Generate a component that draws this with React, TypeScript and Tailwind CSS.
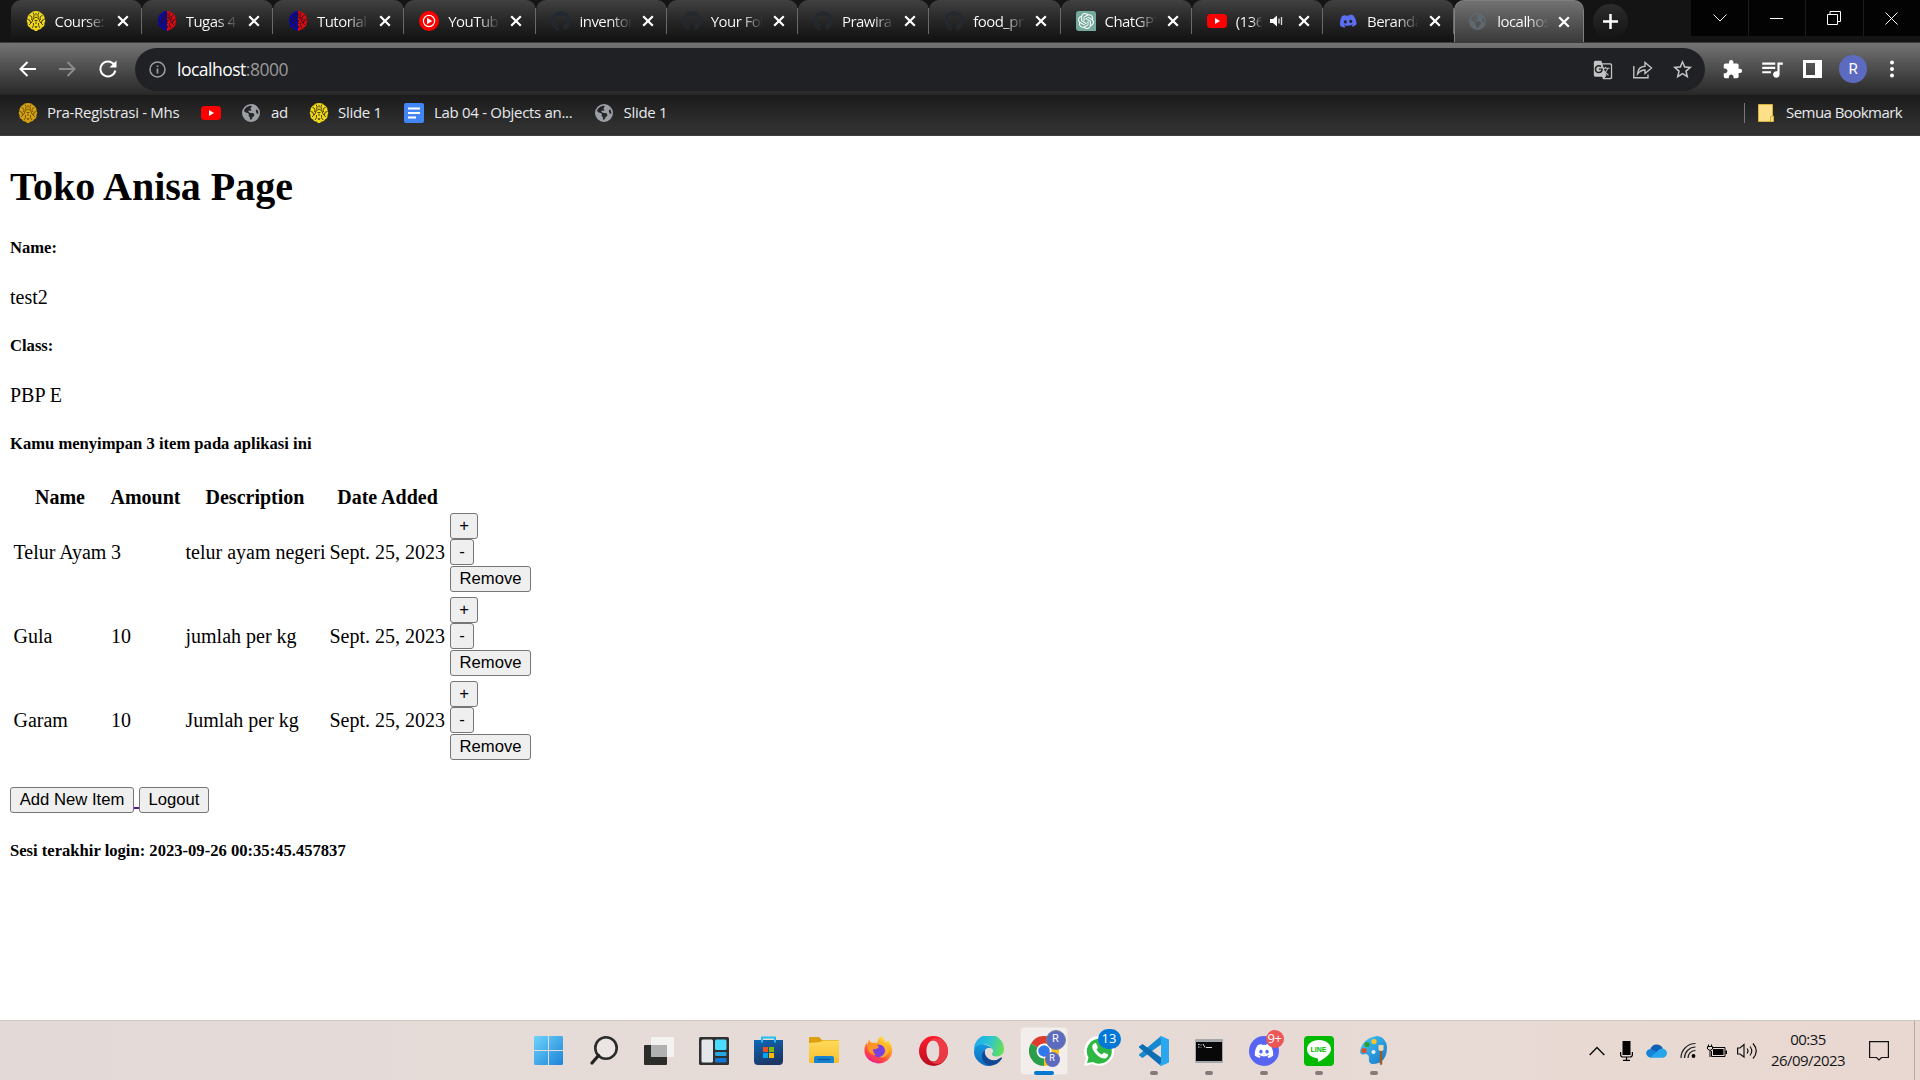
import React from "react";
import { FaGithub, FaDiscord, FaEarthAmericas } from "react-icons/fa6";
import { MdExtension, MdQueueMusic, MdGTranslate, MdStarBorder } from "react-icons/md";
import { SiOpenai } from "react-icons/si";

function Crest({ left, right, detail }: { left: string; right: string; detail: string }) {
  return (
    <svg width="20" height="20" viewBox="0 0 20 20">
      <path d="M10 0Q6 0 5 2Q1.500 4 1.500 7Q0 10 1.500 12Q1 15 4 16.500Q5 19 7.500 18.500L9 20H10Z" fill={left} />
      <path d="M10 0Q14 0 15 2Q18.500 4 18.500 7Q20 10 18.500 12Q19 15 16 16.500Q15 19 12.500 18.500L11 20H10Z" fill={right} />
      <g stroke={detail} strokeWidth=".9" fill="none">
        <path d="M7 1.500Q9 3.500 7.500 6.500M13 1.500Q11 3.500 12.500 6.500M3.500 4.500Q7 5 5.500 9M16.500 4.500Q13 5 14.500 9M1.500 8.500Q5 8.500 4.500 12M18.500 8.500Q15 8.500 15.500 12" />
        <path d="M3 14Q7 11 7 8L10 6L13 8Q13 11 17 14M6 17Q8 15 7.500 12M14 17Q12 15 12.500 12M10 2V4.500M8.500 9.500H11.500M10 10.500V13M9 15L10 17L11 15" />
      </g>
    </svg>
  );
}

function YouTube() {
  return (
    <svg width="20" height="20" viewBox="0 0 20 20">
      <rect y="3" width="20" height="14" rx="3.500" fill="#f00" />
      <path d="M8 7V13L13 10Z" fill="#fff" />
    </svg>
  );
}

function YouTubeMusic() {
  return (
    <svg width="20" height="20" viewBox="0 0 20 20">
      <circle cx="10" cy="10" r="10" fill="#f00" />
      <circle cx="10" cy="10" r="5.600" fill="none" stroke="#fff" strokeWidth="1.200" />
      <path d="M8 6.800V13.200L13.200 10Z" fill="#fff" />
    </svg>
  );
}

function CloseIcon() {
  return (
    <svg width="12" height="12" viewBox="0 0 12 12" className="shrink-0">
      <path d="M1.200 1.200L10.800 10.800M10.800 1.200L1.200 10.800" stroke="#fff" strokeWidth="2.200" />
    </svg>
  );
}

const gold = <Crest left="#efd81c" right="#efd81c" detail="#3a3208" />;
const amber = <Crest left="#d3a012" right="#d3a012" detail="#6e5008" />;
const split = <Crest left="#0a0aa0" right="#d80a0f" detail="#241018" />;
const github = <FaGithub size={20} color="#24292f" />;

const tabs: { title: string; icon: React.ReactNode; audio?: boolean }[] = [
  { title: "Course:", icon: gold },
  { title: "Tugas 4", icon: split },
  { title: "Tutorial", icon: split },
  { title: "YouTube", icon: <YouTubeMusic /> },
  { title: "inventor", icon: github },
  { title: "Your Fol", icon: github },
  { title: "PrawiraR", icon: github },
  { title: "food_pr", icon: github },
  {
    title: "ChatGPT",
    icon: (
      <span className="flex size-5 items-center justify-center rounded-tl-[3px] rounded-tr-[3px] rounded-bl-[3px] bg-[#74aa9c]">
        <SiOpenai size={16} color="#fff" />
      </span>
    ),
  },
  { title: "(136", icon: <YouTube />, audio: true },
  { title: "Beranda", icon: <FaDiscord size={18} color="#5b6df0" className="-rotate-6" /> },
];

function Tab({ title, icon, audio }: { title: string; icon: React.ReactNode; audio?: boolean }) {
  return (
    <div className="flex h-full w-[131.25px] shrink-0 items-center rounded-t-[10px] bg-linear-to-b from-[#414141] via-[#262626] to-[#111]">
      <div className="flex h-full w-full items-center pl-[15px]">
        <span className="flex w-5 justify-center">{icon}</span>
        <span
          className={
            "ml-[9px] overflow-hidden whitespace-nowrap bg-clip-text text-transparent bg-linear-to-r from-white from-60% to-white/5 " +
            (audio ? "w-[26px]" : "w-[51px]")
          }
        >
          {title}
        </span>
        {audio && (
          <svg width="13" height="12" viewBox="0 0 13 12" className="ml-[8px] mr-[4px]">
            <path d="M0 4H3L7 .5V11.500L3 8H0Z" fill="#fff" />
            <path d="M9 3.500V8.500M11.500 2V10" stroke="#ddd" strokeWidth="1.300" />
          </svg>
        )}
        <span className="ml-[11px]">
          <CloseIcon />
        </span>
      </div>
      <span className="h-[26px] w-px shrink-0 bg-[#6a6a6a]" />
    </div>
  );
}

function TabStrip() {
  return (
    <div className="flex h-[42px] bg-[#141414] pl-[10.5px] text-[15px] tracking-[-0.55px] text-white">
      {tabs.map((t, i) => (
        <Tab key={i} {...t} />
      ))}
      <div className="flex w-[130px] items-center rounded-t-[10px] border-x border-t border-[#808080] bg-linear-to-b from-[#727272] to-[#3a3a3a] pl-[14px]">
        <FaEarthAmericas size={17} color="#5f6870" className="mr-[2px]" />
        <span className="ml-[9px] w-[51px] overflow-hidden whitespace-nowrap bg-linear-to-r from-white from-60% to-white/5 bg-clip-text text-transparent">
          localhos
        </span>
        <span className="ml-[10px]">
          <CloseIcon />
        </span>
      </div>
      <div className="mt-[4px] ml-[9px] flex size-[35px] items-center justify-center rounded-full bg-linear-to-b from-[#2c2c2c] to-[#141414]">
        <svg width="15" height="15" viewBox="0 0 15 15">
          <path d="M7.500 0V15M0 7.500H15" stroke="#fff" strokeWidth="2.500" />
        </svg>
      </div>
      <div className="ml-auto flex h-9 bg-[#030303]">
        <div className="flex w-[58px] items-center justify-center border-r border-[#1c1c1c]">
          <svg width="14" height="8" viewBox="0 0 14 8"><path d="M.5 .5L7 7L13.500 .5" stroke="#eee" fill="none" /></svg>
        </div>
        <div className="flex w-[57px] items-center justify-center border-r border-[#1c1c1c]">
          <span className="mr-px h-px w-[13px] bg-white" />
        </div>
        <div className="flex w-[58px] items-center justify-center border-r border-[#1c1c1c] pr-[2px]">
          <svg width="14" height="14" viewBox="0 0 14 14"><path d="M.5 3.500H10.500V13.500H.5ZM3 3V.5H13.500V10.500H11" stroke="#fff" fill="none" /></svg>
        </div>
        <div className="flex w-[56px] items-center justify-center pr-[2px]">
          <svg width="13" height="13" viewBox="0 0 13 13"><path d="M.5 .5L12.500 12.500M12.500 .5L.5 12.500" stroke="#fff" /></svg>
        </div>
      </div>
    </div>
  );
}

function Arrow({ color, flip }: { color: string; flip?: boolean }) {
  return (
    <svg width="17" height="16" viewBox="0 0 17 16" className={flip ? "-scale-x-100" : ""}>
      <path d="M8.500 1L1.500 8L8.500 15M1.500 8H17" stroke={color} strokeWidth="2" fill="none" />
    </svg>
  );
}

function Toolbar() {
  return (
    <div className="flex h-[53px] border-t border-[#3c3c3c] bg-linear-to-b from-[#747474] to-[#282828] pt-[5px]">
      <div className="flex h-[42px] w-[135px] items-center pl-[19px]">
        <Arrow color="#fff" />
        <span className="ml-[23px]"><Arrow color="#8b8b8b" flip /></span>
        <svg width="18" height="18" viewBox="0 0 18 18" className="ml-[23px]">
          <path d="M15 4.500A7.500 7.500 0 1 0 16.300 10.500" stroke="#fff" strokeWidth="2" fill="none" />
          <path d="M17.500 .5V7.500H10.500Z" fill="#fff" />
        </svg>
      </div>
      <div className="flex h-[43px] w-[1570px] items-center rounded-full bg-[#202124] pl-[14px] pr-[11px]">
        <svg width="17" height="17" viewBox="0 0 17 17">
          <circle cx="8.500" cy="8.500" r="7.500" stroke="#9aa0a6" strokeWidth="1.500" fill="none" />
          <path d="M8.500 7.500V12.500M8.500 4.500V6" stroke="#9aa0a6" strokeWidth="1.700" />
        </svg>
        <span className="ml-[11px] text-[17.5px] tracking-[-0.5px] text-[#9a9a9a]">
          <span className="text-white">localhost</span>:8000
        </span>
        <div className="ml-auto flex items-center text-[#c4c4c4]">
          <MdGTranslate size={20} />
          <svg width="20" height="18" viewBox="0 0 20 18" className="ml-[20px]">
            <path d="M.8 5V16.800H15V13.500M4.500 13Q5 5.500 12 5.200V1.500L18.500 7L12 12.500V9Q7.500 9 4.500 13Z" stroke="#c4c4c4" strokeWidth="1.400" fill="none" />
          </svg>
          <MdStarBorder size={23} className="ml-[18px]" />
        </div>
      </div>
      <div className="flex h-[42px] items-center pl-[17px] text-white">
        <MdExtension size={21} />
        <MdQueueMusic size={26} className="ml-[16px]" />
        <svg width="19" height="18" viewBox="0 0 19 18" className="ml-[18px]">
          <path d="M0 0H19V18H0ZM3 3V15H12V3Z" fill="#fff" fillRule="evenodd" />
        </svg>
        <span className="ml-[17px] flex size-7 items-center justify-center rounded-full bg-[#5c6bc0] font-[Roboto,sans-serif] text-[15px]">
          R
        </span>
        <svg width="4" height="18" viewBox="0 0 4 18" className="ml-[23px]" fill="#fff">
          <circle cx="2" cy="2.500" r="2" /><circle cx="2" cy="9" r="2" /><circle cx="2" cy="15.500" r="2" />
        </svg>
      </div>
    </div>
  );
}

function Bookmarks() {
  return (
    <div className="flex h-[41px] items-center border-b border-[#3e3e3e] bg-linear-to-b from-[#1b1b1b] to-[#303030] to-80% pb-[5px] pl-[18px] pr-[17px] text-[15px] tracking-[-0.3px] whitespace-nowrap text-[#e8eaed]">
      {amber}
      <span className="ml-[9px] w-[154px]">Pra-Registrasi - Mhs</span>
      <YouTube />
      <FaEarthAmericas size={18} color="#9aa0a6" className="ml-[21px]" />
      <span className="ml-[11px] w-[38px]">ad</span>
      {gold}
      <span className="ml-[9px] w-[66px]">Slide 1</span>
      <svg width="20" height="20" viewBox="0 0 20 20">
        <rect width="20" height="20" rx="2" fill="#4285f4" />
        <path d="M4 5.500H16M4 10H16M4 14.500H12" stroke="#fff" strokeWidth="2" />
      </svg>
      <span className="ml-[10px] w-[161px]">Lab 04 - Objects an...</span>
      <FaEarthAmericas size={18} color="#9aa0a6" />
      <span className="ml-[10.5px]">Slide 1</span>
      <span className="ml-auto h-5 w-px bg-[#777]" />
      <svg width="16" height="18" viewBox="0 0 16 18" className="ml-[13px]">
        <path d="M.5 .5H14.500V12H15.500V17.500H.5Z" fill="#ffe08a" stroke="#d9b038" />
        <path d="M12.500 17V12.500H15" stroke="#d9b038" fill="none" />
      </svg>
      <span className="ml-[12px] w-[117px] tracking-[-0.55px]">Semua Bookmark</span>
    </div>
  );
}

const items = [
  ["Telur Ayam", "3", "telur ayam negeri"],
  ["Gula", "10", "jumlah per kg"],
  ["Garam", "10", "Jumlah per kg"],
];

function Button({ children, className }: { children: React.ReactNode; className: string }) {
  return (
    <button
      className={
        "flex h-[26px] shrink-0 items-center justify-center rounded-[3px] border border-[#767676] bg-[#efefef] pt-px font-['Liberation_Sans',sans-serif] text-[16.67px] leading-none whitespace-nowrap text-black " +
        className
      }
    >
      {children}
    </button>
  );
}

function Page() {
  return (
    <main className="h-[884px] overflow-hidden bg-white px-[10px] pt-[28px] font-['Liberation_Serif',serif] text-[20px] leading-[23px] text-black">
      <h1 className="text-[40px] leading-[46px] font-bold">Toko Anisa Page</h1>
      <h5 className="mt-[28px] text-[16.6px] leading-[19px] font-bold">Name:</h5>
      <p className="mt-[29px]">test2</p>
      <h5 className="mt-[27px] text-[16.6px] leading-[19px] font-bold">Class:</h5>
      <p className="mt-[29px]">PBP E</p>
      <h5 className="mt-[27px] text-[16.6px] leading-[19px] font-bold">Kamu menyimpan 3 item pada aplikasi ini</h5>
      <table className="mt-[27px] w-[524px] table-fixed border-collapse">
        <colgroup>
          <col className="w-[97px]" />
          <col className="w-[75px]" />
          <col className="w-[144px]" />
          <col className="w-[121px]" />
          <col />
        </colgroup>
        <thead>
          <tr className="h-[30px] font-bold">
            <th className="pt-[4px] pl-[3px]">Name</th>
            <th className="pt-[4px] pl-[2px]">Amount</th>
            <th className="pt-[4px] pl-[2px]">Description</th>
            <th className="pt-[4px] pl-[2px]">Date Added</th>
            <th />
          </tr>
        </thead>
        <tbody>
          {items.map(([name, amount, description]) => (
            <tr key={name} className="h-[84px] whitespace-nowrap">
              <td className="pt-px pl-[3.5px]">{name}</td>
              <td className="pt-px pl-[4px]">{amount}</td>
              <td className="pt-px pl-[3.5px]">{description}</td>
              <td className="pt-px pl-[3.5px]">Sept. 25, 2023</td>
              <td className="pl-[3px]">
                <div className="flex h-[79px] flex-col items-start justify-between">
                  <Button className="w-[28px]">+</Button>
                  <Button className="w-[24px]">-</Button>
                  <Button className="w-[81px]">Remove</Button>
                </div>
              </td>
            </tr>
          ))}
        </tbody>
      </table>
      <div className="mt-[25px] flex">
        <Button className="w-[124px]">Add New Item</Button>
        <span className="mt-[20px] h-[2px] w-[5px] bg-[#551a8b]" />
        <Button className="w-[70px]">Logout</Button>
      </div>
      <h5 className="mt-[28px] text-[16.6px] leading-[19px] font-bold">
        Sesi terakhir login: 2023-09-26 00:35:45.457837
      </h5>
    </main>
  );
}

function Windows() {
  return (
    <svg width="29" height="29" viewBox="0 0 29 29">
      <defs>
        <linearGradient id="win" x1="0" y1="0" x2="1" y2="1"><stop stopColor="#6fd3fb" /><stop offset="1" stopColor="#1c83d8" /></linearGradient>
      </defs>
      <path d="M1 0H14V14H0V1ZM15 0H28L29 1V14H15ZM0 15H14V29H1L0 28ZM15 15H29V28L28 29H15Z" fill="url(#win)" />
    </svg>
  );
}

function Search() {
  return (
    <svg width="28" height="29" viewBox="0 0 28 29">
      <circle cx="16" cy="12" r="10.700" stroke="#2b2b2b" strokeWidth="2.600" fill="#f4f0ef" fillOpacity=".5" />
      <path d="M8.500 19.500L2 27" stroke="#222" strokeWidth="3.200" strokeLinecap="round" />
    </svg>
  );
}

function TaskView() {
  return (
    <svg width="30" height="28" viewBox="0 0 30 28">
      <rect y="8" width="23" height="20" rx="1" fill="#2c2d2a" />
      <rect x="7" width="23" height="20" rx="1" fill="#f7f7f7" fillOpacity=".85" />
      <rect x="7" y="8" width="16" height="12" fill="#a8a8a8" fillOpacity=".8" />
    </svg>
  );
}

function Widgets() {
  return (
    <svg width="30" height="28" viewBox="0 0 30 28">
      <rect width="30" height="28" rx="1.500" fill="#303030" />
      <rect x="2.500" y="2.500" width="11.500" height="23" rx="1.500" fill="#e4e7e9" />
      <rect x="16" y="2.500" width="11.500" height="10.500" rx="1.500" fill="#4cdcff" />
      <rect x="16" y="15" width="11.500" height="4" rx="1" fill="#28a6e4" />
      <rect x="16" y="21" width="11.500" height="4.500" rx="1" fill="#1078d4" />
    </svg>
  );
}

function Store() {
  return (
    <svg width="29" height="29" viewBox="0 0 29 29">
      <defs><linearGradient id="store" x1="0" y1="0" x2=".4" y2="1"><stop stopColor="#0d68b8" /><stop offset="1" stopColor="#1c3767" /></linearGradient></defs>
      <path d="M8 6V1.500H21V6" stroke="#23bff2" strokeWidth="2" fill="none" />
      <path d="M0 4H29V25Q29 29 25 29H4Q0 29 0 25Z" fill="url(#store)" />
      <path d="M8 4V6.500M21 4V6.500" stroke="#23bff2" strokeWidth="2" />
      <path d="M9 11H14V16H9Z" fill="#f25022" /><path d="M15 11H20V16H15Z" fill="#7fba00" />
      <path d="M9 17H14V22H9Z" fill="#00a4ef" /><path d="M15 17H20V22H15Z" fill="#ffb900" />
    </svg>
  );
}

function Explorer() {
  return (
    <svg width="30" height="27" viewBox="0 0 30 27">
      <defs><linearGradient id="fold" x1="0" y1="0" x2="0" y2="1"><stop stopColor="#ffda5c" /><stop offset="1" stopColor="#f8be2e" /></linearGradient></defs>
      <path d="M0 1Q0 0 1 0H10L13 3H29Q30 3 30 4V10H0Z" fill="#dc9f0e" />
      <path d="M0 6L11 5L14 3.500H30V25Q30 26 29 26H1Q0 26 0 25Z" fill="url(#fold)" />
      <path d="M5 26V21Q5 19 7 19H23Q25 19 25 21V26Z" fill="#1784d2" />
      <path d="M8.500 22.500H21.500" stroke="#0c599f" strokeWidth="1.500" />
    </svg>
  );
}

function Firefox() {
  return (
    <svg width="29" height="29" viewBox="0 0 29 29">
      <defs><linearGradient id="fx" x1=".8" y1="0" x2=".25" y2="1"><stop stopColor="#fff14a" /><stop offset=".4" stopColor="#ff9a1f" /><stop offset=".75" stopColor="#ff4248" /><stop offset="1" stopColor="#e3199a" /></linearGradient></defs>
      <path d="M17 0Q21 3 21 6Q23 7 24 4Q29 10 28 17A14 13.500 0 0 1 .5 16Q0 10 3 6.500V10L5 3.500Q6 6 8 7Q11 6 13 7Q14 2 17 0Z" fill="url(#fx)" />
      <circle cx="15" cy="15" r="6.500" fill="#7a3fe0" />
      <path d="M3 10Q7 6 13 9L15 11Q12 14 9 13Q9 17 12 19Q8 20 5 16Z" fill="#ff9526" />
      <path d="M14 8Q21 9 21 15Q20 20 15 21Q22 23 25 15Q23 7 18 6Z" fill="#ffbd2f" fillOpacity=".75" />
    </svg>
  );
}

function Opera() {
  return (
    <svg width="29" height="30" viewBox="0 0 29 30">
      <defs><linearGradient id="op" x1="0" y1="0" x2="0" y2="1"><stop stopColor="#ff1b2d" /><stop offset="1" stopColor="#b80d20" /></linearGradient></defs>
      <path fillRule="evenodd" d="M14.500 0A14.500 15 0 1 0 14.500 30A14.500 15 0 1 0 14.500 0ZM14.500 4.500C18.500 4.500 20.500 9 20.500 15S18.500 25.500 14.500 25.500S7.500 21 7.500 15S10 4.500 14.500 4.500Z" fill="url(#op)" />
      <path d="M10 6Q15 0 22 3Q29 7 29 15T22 27Q16 30 10 24Q13 26.500 16 25.200Q20.500 23 20.500 15T16 4.800Q13 3.500 10 6Z" fill="#f0434c" fillOpacity=".8" />
    </svg>
  );
}

function Edge() {
  return (
    <svg width="30" height="30" viewBox="0 0 30 30">
      <defs>
        <linearGradient id="ed" x1="0" y1=".3" x2="1" y2=".5"><stop stopColor="#1ca9ec" /><stop offset=".5" stopColor="#2cc4d4" /><stop offset="1" stopColor="#67e052" /></linearGradient>
        <linearGradient id="ed2" x1="0" y1="0" x2="0" y2="1"><stop stopColor="#1499e0" /><stop offset="1" stopColor="#0b68bb" /></linearGradient>
      </defs>
      <path d="M0 14A15 15 0 0 1 30 13Q30 20 23 20.500Q17.500 20.500 18 17.500Q20 16 18.500 13Q15 7 8 9Q2 10 0 14Z" fill="url(#ed)" />
      <path d="M0 15Q1 8 9 8.500Q16 9 18.500 13Q14 10 11 14Q7 20 12 25Q16 29 19 29Q12 32 5 26Q-.5 21 0 15Z" fill="url(#ed2)" />
      <path d="M11 14Q10 20 15 23Q21 26 27 21.500Q28.500 21 28 22.500Q23 30 16 29.500Q7 27 8 19Q9 15 11 14Z" fill="#114a93" />
    </svg>
  );
}

function Chrome() {
  return (
    <svg width="30" height="30" viewBox="0 0 30 30">
      <path d="M15 15L2 7.500A15 15 0 0 1 28 7.500Z" fill="#df3c30" />
      <path d="M15 15L2 7.500A15 15 0 0 0 15 30L21.500 18.700Z" fill="#2b9d4b" />
      <path d="M15 15L15 30A15 15 0 0 0 28 7.500H15Z" fill="#fcc21b" />
      <circle cx="15" cy="15" r="7.500" fill="#fff" /><circle cx="15" cy="15" r="5.800" fill="#3079ed" />
    </svg>
  );
}

function WhatsApp() {
  return (
    <svg width="32" height="32" viewBox="0 0 32 32">
      <path d="M1 31L3 23A15 15 0 1 1 9 29Z" fill="#fff" />
      <path d="M4 28L5.500 22.500A12.500 12.500 0 1 1 10 27Z" fill="#2eb843" />
      <path d="M11 8.500Q13 7.500 13.500 9L14.800 12Q15 13 13.500 14.500Q15.500 18.500 19 19.500L21 17.500L25 19.500Q25 22.500 22 23.500Q18 24 13.500 19.500Q8 14 9.500 10Z" fill="#fff" />
    </svg>
  );
}

function VsCode() {
  return (
    <svg width="30" height="30" viewBox="0 0 30 30">
      <path d="M22 0V8.500L3.500 22L0 19.500V18.500Z" fill="#1789d1" />
      <path d="M0 11.500V10.500L3.500 8L22 21.500V30Z" fill="#0c6eb4" />
      <path d="M22 0L30 3.500V26.500L22 30L20.500 28.500L22 27V3L20.500 1.500Z" fill="#2ba7ef" />
    </svg>
  );
}

function Terminal() {
  return (
    <svg width="28" height="24" viewBox="0 0 28 24">
      <rect width="28" height="24" rx="1" fill="#a4a8aa" /><rect x="1" y="3" width="26" height="19" fill="#080808" />
      <path d="M3 5.500H4.500M3 8H4.500M6 5.500V6.500M6 8V8.500M8 5L10 8.500M11 8.500H17" stroke="#ddd" />
    </svg>
  );
}

function Line() {
  return (
    <span className="grid size-[30px] place-items-center rounded-[4px] bg-[#00b900]">
      <svg width="24" height="22" viewBox="0 0 24 22" className="col-start-1 row-start-1">
        <path d="M12 0C5 0 0 4 0 9.300C0 14 4 17.300 10 18.200C11.500 18.500 11 20 11 22C16 19.500 24 15 24 9.300C24 4 19 0 12 0Z" fill="#fff" />
      </svg>
      <span className="col-start-1 row-start-1 pb-[2px] font-['Liberation_Sans',sans-serif] text-[7px] leading-none font-bold text-[#00b900]">LINE</span>
    </span>
  );
}

function Paint() {
  return (
    <svg width="29" height="29" viewBox="0 0 29 29">
      <defs><linearGradient id="pt" x1="0" y1="0" x2="1" y2="1"><stop stopColor="#48c9f5" /><stop offset="1" stopColor="#1276c8" /></linearGradient></defs>
      <path d="M18 0Q27 1 28 11Q28 28 13 28Q9 27 10 22Q10 18 6 18Q1 20 1 15Q4 2 18 0Z" fill="url(#pt)" />
      <circle cx="5" cy="14.500" r="2.600" fill="#e04f25" /><circle cx="8" cy="8.500" r="2.600" fill="#28a428" /><circle cx="15" cy="5.500" r="2.600" fill="#ffc32e" /><circle cx="14.500" cy="16" r="2.100" fill="#e8eef2" />
      <path d="M19.500 9H24.500V14Q22 16 19.500 14Z" fill="#f0d6b0" /><path d="M20.800 15H23.200V28Q22 30 20.800 28Z" fill="#a4591d" />
    </svg>
  );
}

const apps: { icon: React.ReactNode; running?: boolean; active?: boolean; badge?: React.ReactNode }[] = [
  { icon: <Windows /> },
  { icon: <Search /> },
  { icon: <TaskView /> },
  { icon: <Widgets /> },
  { icon: <Store /> },
  { icon: <Explorer /> },
  { icon: <Firefox /> },
  { icon: <Opera /> },
  { icon: <Edge /> },
  {
    icon: <Chrome />,
    active: true,
    badge: (
      <>
        <span className="absolute top-[2px] left-[25px] flex size-[20px] items-center justify-center rounded-full border border-[#77809c] bg-[#5c6bc0] font-[Roboto,sans-serif] text-[11px] text-white">R</span>
        <span className="absolute top-[24px] left-[24px] flex size-[15px] items-center justify-center rounded-full bg-[#5c6bc0] font-[Roboto,sans-serif] text-[9px] text-white">R</span>
      </>
    ),
  },
  {
    icon: <WhatsApp />,
    badge: <span className="absolute top-[2px] left-[23px] flex h-[20px] w-[23px] items-center justify-center rounded-full bg-[#0078d7] text-[13px] text-white">13</span>,
  },
  { icon: <VsCode />, running: true },
  { icon: <Terminal />, running: true },
  {
    icon: (
      <span className="flex size-[30px] items-center justify-center rounded-full bg-[#5865f2]">
        <FaDiscord size={20} color="#fff" />
      </span>
    ),
    running: true,
    badge: <span className="absolute top-[3px] left-[26px] flex size-[18px] items-center justify-center rounded-full bg-[#ed5557] text-[13px] tracking-[-0.5px] text-white">9+</span>,
  },
  { icon: <Line />, running: true },
  { icon: <Paint />, running: true },
];

function Tray() {
  return (
    <div className="ml-[188px] flex items-center">
      <svg width="16" height="10" viewBox="0 0 16 10"><path d="M.7 9L8 1.500L15.300 9" stroke="#111" strokeWidth="1.500" fill="none" /></svg>
      <svg width="13" height="20" viewBox="0 0 13 20" className="ml-[15px]"><rect x="2.500" width="8" height="14" fill="#000" /><path d="M.6 11V13.500Q.6 16 3 16H10Q12.400 16 12.400 13.500V11M6.500 16V19M3 19.300H10" stroke="#000" strokeWidth="1.200" fill="none" /></svg>
      <svg width="21" height="14" viewBox="0 0 21 14" className="ml-[13px]">
        <path d="M4 6Q6 0 11 .5Q16 1 17 5L10 10L2 8Z" fill="#0f5fb5" /><path d="M4 13.500Q0 12 .2 8.500Q1 5 5 5L11 8L6 13.500Z" fill="#1683d8" /><path d="M4 13.500L11 7.500Q13 4.500 16.500 4.500Q21 5.500 21 9.500Q20.500 13 17 13.700H5Z" fill="#27a5ea" />
      </svg>
      <svg width="16" height="17" viewBox="0 0 16 17" className="ml-[13px]">
        <path d="M1 16A14.500 14.500 0 0 1 15.500 1.500M4.500 16A11 11 0 0 1 15.500 5M8 16A7.500 7.500 0 0 1 15.500 8.500" stroke="#222" strokeWidth="1.200" fill="none" /><circle cx="13.500" cy="14" r="1.900" fill="#000" />
      </svg>
      <svg width="20" height="14" viewBox="0 0 20 14" className="ml-[11px]">
        <path d="M6 3.500H18V12.500H4.500V7" stroke="#000" fill="none" /><rect x="6" y="5" width="10.500" height="6" fill="#000" /><rect x="18.500" y="6.500" width="1.500" height="3.500" fill="#000" /><path d="M.5 2.500H5.500V5L3 6.500L.5 5ZM1.500 2.500V.5M4.500 2.500V.5M3 6V13" stroke="#000" fill="none" />
      </svg>
      <svg width="21" height="18" viewBox="0 0 21 18" className="ml-[10px]">
        <path d="M.6 6H3L7 2.500V15L3 12H.6ZM10 6.500Q12 9 10 11.500M13 4.500Q16.500 9 13 13.500M16 1.500Q22.500 9 16 16.500" stroke="#111" strokeWidth="1.200" fill="none" />
      </svg>
      <div className="mb-[2px] ml-[11px] flex w-[78px] flex-col items-center text-[15px] leading-[21px] tracking-[-0.55px] text-[#151515]">
        <span>00:35</span>
        <span>26/09/2023</span>
      </div>
      <svg width="20" height="20" viewBox="0 0 20 20" className="ml-[22px]"><path d="M.6 .6H19.400V16.500H12.500L10 19L7.500 16.500H.6Z" stroke="#111" strokeWidth="1.200" fill="none" /></svg>
      <span className="ml-[25px] h-[60px] w-px bg-[#b7aaa5]" />
    </div>
  );
}

function Taskbar() {
  return (
    <div className="flex h-[60px] items-center border-t border-[#cfc8c5] bg-linear-to-r from-[#e3dad7] via-[#e6dbd7] to-[#e9d8d1] pl-[521px]">
      {apps.map((app, i) => (
        <div key={i} className="flex h-[58px] w-[55px] shrink-0 items-center justify-center">
          <div
            className={
              "relative flex size-12 items-center justify-center rounded-[4px] " +
              (app.active ? "border border-[#e9e3e1] bg-[#f3eeec]" : "")
            }
          >
            {app.icon}
            {app.badge}
            {app.running && <span className="absolute bottom-0 left-[20px] h-1 w-2 rounded-full bg-[#85797a]" />}
            {app.active && <span className="absolute bottom-[-1px] left-[13px] h-1 w-5 rounded-full bg-[#0078d4]" />}
          </div>
        </div>
      ))}
      <Tray />
    </div>
  );
}

export default function App() {
  return (
    <div className="flex h-[1080px] w-[1920px] flex-col overflow-hidden font-['Open_Sans','Noto_Sans',sans-serif]">
      <TabStrip />
      <Toolbar />
      <Bookmarks />
      <Page />
      <Taskbar />
    </div>
  );
}
